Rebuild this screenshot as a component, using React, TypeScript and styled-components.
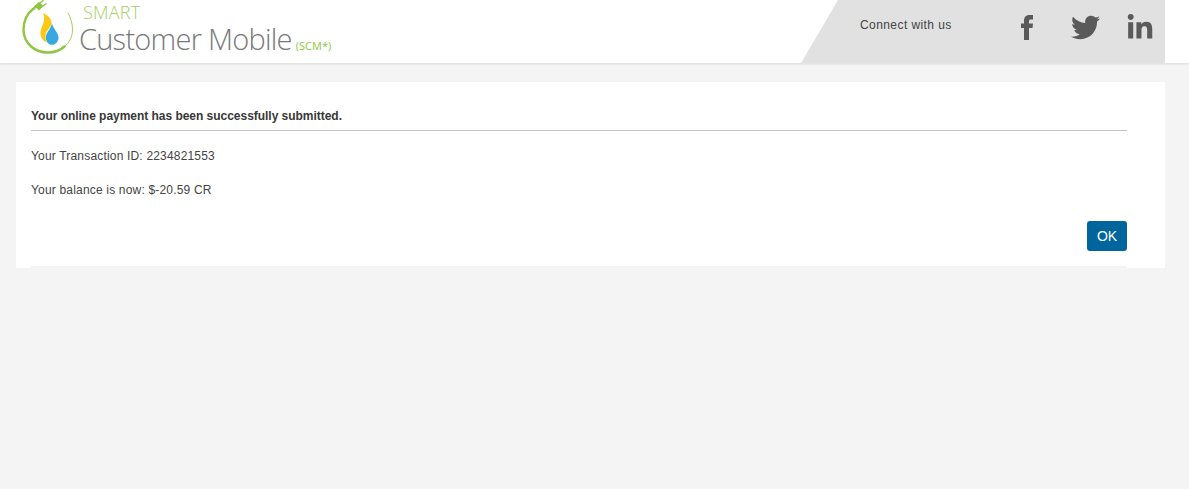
import React from "react";
import styled, { createGlobalStyle } from "styled-components";
import { FaTwitter, FaLinkedinIn } from "react-icons/fa";

const Global = createGlobalStyle`
  html, body { margin: 0; padding: 0; background: #f4f4f4; }
  body { font-family: "Liberation Sans", Arial, sans-serif; color: #333; }
`;

const Page = styled.div`
  width: 1189px;
  height: 489px;
  overflow: hidden;
  background: #f4f4f4;
`;

const Header = styled.header`
  height: 63px;
  background: #fff;
  box-shadow: 0 1px 2px rgba(0, 0, 0, 0.1);
  display: flex;
  justify-content: space-between;
  padding-right: 24px;
`;

const Brand = styled.div`
  display: flex;
  align-items: flex-start;
  padding-left: 22px;
`;

const BrandText = styled.div`
  display: flex;
  flex-direction: column;
  margin-left: 1px;
  font-family: "Open Sans", sans-serif;
  font-weight: 300;
`;

const Smart = styled.div`
  font-size: 18px;
  line-height: 18px;
  margin: 3px 0 0 4px;
  letter-spacing: 0.2px;
  color: #a3cf62;
`;

const ProductLine = styled.div`
  display: flex;
  align-items: baseline;
  margin-top: 1px;
`;

const Product = styled.div`
  font-size: 29px;
  line-height: 34px;
  letter-spacing: -0.75px;
  color: #77787b;
`;

const Suffix = styled.span`
  font-size: 11px;
  font-weight: 400;
  margin-left: 4px;
  color: #8dc63f;
`;

const Social = styled.div`
  width: 364px;
  height: 63px;
  box-sizing: border-box;
  background: #e1e1e1;
  clip-path: polygon(37px 0, 100% 0, 100% 100%, 0 100%);
  display: flex;
  align-items: flex-start;
  padding: 18px 0 0 59px;
`;

const SocialLabel = styled.span`
  font-size: 12px;
  line-height: 15px;
  letter-spacing: 0.42px;
  color: #444;
  width: 149px;
`;

const SocialIcons = styled.div`
  display: flex;
  align-items: center;
  color: #5a5a5a;
  margin-top: -5px;
`;

const SocialLink = styled.a<{ $w: number }>`
  display: flex;
  justify-content: center;
  width: ${(p) => p.$w}px;
  color: inherit;
`;

const Card = styled.main`
  margin: 19px 24px 0 16px;
  height: 186px;
  box-sizing: border-box;
  background: #fff;
  padding: 0 38px 0 15px;
`;

const Inner = styled.div`
  height: 186px;
  box-sizing: border-box;
  border-bottom: 2px solid #f4f4f4;
  padding-top: 27px;
`;

const Title = styled.h1`
  margin: 0;
  padding-bottom: 6px;
  font-size: 12px;
  line-height: 15px;
  font-weight: 700;
  letter-spacing: -0.03px;
  color: #383838;
  border-bottom: 1px solid #c4c4c4;
`;

const Line = styled.p`
  margin: 0;
  font-size: 12px;
  line-height: 15px;
  letter-spacing: 0.18px;
  color: #444;
  padding-top: 18px;
  & + & { padding-top: 19px; }
`;

const Actions = styled.div`
  display: flex;
  justify-content: flex-end;
  margin-top: 23px;
`;

const OkButton = styled.button`
  width: 40px;
  height: 30px;
  border: 0;
  padding: 0;
  border-radius: 3px;
  background: #00659c;
  color: #fff;
  font-family: "Liberation Sans", Arial, sans-serif;
  font-size: 14px;
`;

const Logo = () => (
  <svg width="56" height="56" viewBox="0 0 56 56" fill="none">
    <path d="M42 47C47.5 42.5 50.5 36.5 50.5 30C50.5 23 48.5 17.5 46 13" stroke="#a3cf62" strokeWidth="1" />
    <path d="M11 9C4.5 14 1.5 22 1.5 30C2 44 13 52.5 26 52.5C32.5 52.5 38 50.5 42.5 46.5" stroke="#8dc63f" strokeWidth="2.4" strokeLinecap="round" />
    <path d="M11 9.5L14 6" stroke="#8dc63f" strokeWidth="2.6" />
    <path d="M12.5 6L17 1.8L21.5 6.3L17 10.5Z" fill="#8dc63f" />
    <path d="M18 3L21.5 0.3M21 6L24.5 3.5" stroke="#8dc63f" strokeWidth="1.4" />
    <path d="M21 13C26 15.5 30 19 29.5 23.5C29 27 25.5 29.5 24 33C23 36 23.5 39.5 24.5 42.5C21 41 18 37 18.5 32C19 26 24.5 21.5 21 13Z" fill="#fcc813" />
    <path d="M30 23.5C31.5 29 36.5 33 36.5 37.5C36.5 41.5 33.5 44.8 30 44.8C26.5 44.8 23.8 41.5 23.8 37.5C23.8 33 28.5 29 30 23.5Z" fill="#37a9e1" />
  </svg>
);

const FacebookMark = () => (
  <svg width="12" height="25" viewBox="0 0 12 25" fill="currentColor">
    <path d="M3 25V13H0V8.5H3V6C3 2 5 0 8.5 0H12V4.5H9.8C8.7 4.5 8 5 8 6.2V8.5H12L11.5 13H8V25Z" />
  </svg>
);

export default function App() {
  return (
    <Page>
      <Global />
      <Header>
        <Brand>
          <Logo />
          <BrandText>
            <Smart>SMART</Smart>
            <ProductLine>
              <Product>Customer Mobile</Product>
              <Suffix>(SCM*)</Suffix>
            </ProductLine>
          </BrandText>
        </Brand>
        <Social>
          <SocialLabel>Connect with us</SocialLabel>
          <SocialIcons>
            <SocialLink $w={36}><FacebookMark /></SocialLink>
            <SocialLink $w={81}><FaTwitter size={29} /></SocialLink>
            <SocialLink $w={28}><FaLinkedinIn size={28} /></SocialLink>
          </SocialIcons>
        </Social>
      </Header>
      <Card>
        <Inner>
          <Title>Your online payment has been successfully submitted.</Title>
          <Line>Your Transaction ID: 2234821553</Line>
          <Line>Your balance is now: $-20.59 CR</Line>
          <Actions>
            <OkButton>OK</OkButton>
          </Actions>
        </Inner>
      </Card>
    </Page>
  );
}
